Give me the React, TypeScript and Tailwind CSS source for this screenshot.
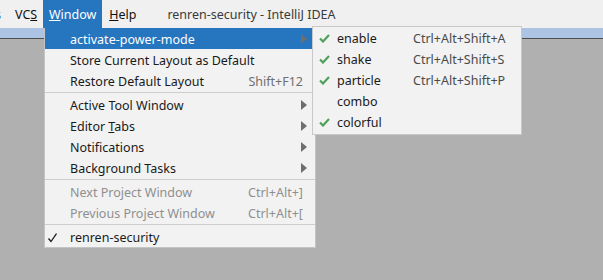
import React from "react";

const font = { fontFamily: '"Noto Sans", "Liberation Sans", sans-serif' };

function Arrow() {
  return (
    <svg width="6" height="10" viewBox="0 0 6 10" className="absolute right-[8px] top-[6px]">
      <path d="M0 0 L6 5 L0 10 Z" fill="#6e6e6e" />
    </svg>
  );
}

function GreenCheck() {
  return (
    <svg width="11" height="9" viewBox="0 0 11 9" className="absolute left-[6px] top-[6px]">
      <path d="M1 4.5 L4 7.5 L10 1" fill="none" stroke="#4fa05c" strokeWidth="2.2" />
    </svg>
  );
}

type Item = { label: React.ReactNode; shortcut?: string; arrow?: boolean; disabled?: boolean; active?: boolean; check?: boolean };

function Row({ item }: { item: Item }) {
  const color = item.active ? "text-white" : item.disabled ? "text-[#8f8f8f]" : "text-[#1a1a1a]";
  return (
    <div className={`relative flex h-[21px] items-center pl-[25px] pr-[12px] pt-[3px] ${item.active ? "bg-[#2675bf]" : ""} ${color}`}>
      {item.check && (
        <svg width="9" height="10" viewBox="0 0 9 10" className="absolute left-[3px] top-[7px]">
          <path d="M0.5 5.5 L3 8.5 L8.5 0.5" fill="none" stroke="#1a1a1a" strokeWidth="1.3" />
        </svg>
      )}
      <span className="flex-1 whitespace-nowrap">{item.label}</span>
      {item.shortcut && (
        <span className={`whitespace-nowrap ${item.disabled ? "text-[#8f8f8f]" : "text-[#707070]"}`}>{item.shortcut}</span>
      )}
      {item.arrow && <Arrow />}
    </div>
  );
}

function Sep() {
  return <div className="my-px h-px bg-[#cdcdcd]" />;
}

export default function App() {
  const sub = [
    { label: "enable", shortcut: "Ctrl+Alt+Shift+A", check: true },
    { label: "shake", shortcut: "Ctrl+Alt+Shift+S", check: true },
    { label: "particle", shortcut: "Ctrl+Alt+Shift+P", check: true },
    { label: "combo", check: false },
    { label: "colorful", check: true },
  ];
  return (
    <div className="relative h-[280px] w-[603px] overflow-hidden bg-[#b0b0b0] text-[12.5px]" style={font}>
      <div className="flex h-[28px] items-center bg-[#f0f0f0] pt-[2px] text-[#111]">
        <span className="ml-[-5px] w-[20px]">s</span>
        <span>VC<span className="underline">S</span></span>
        <span className="ml-[6px] mt-[-2px] flex h-[28px] w-[59px] items-center justify-center bg-[#2675bf] pt-[2px] text-white">
          <span><span className="underline">W</span>indow</span>
        </span>
        <span className="ml-[7px]"><span className="underline">H</span>elp</span>
        <span className="ml-[31px] text-[#3a3a3a]">renren-security - IntelliJ IDEA</span>
      </div>
      <div className="h-[11px] border-b border-[#4d4d4d] bg-[#adc3e3]" />

      <div className="absolute left-[44px] top-[28px] w-[272px] border-x border-b border-[#c4c4c4] bg-[#f2f2f2]">
        <Row item={{ label: "activate-power-mode", arrow: true, active: true }} />
        <Row item={{ label: "Store Current Layout as Default" }} />
        <Row item={{ label: "Restore Default Layout", shortcut: "Shift+F12" }} />
        <Sep />
        <Row item={{ label: "Active Tool Window", arrow: true }} />
        <Row item={{ label: <span>Editor <span className="underline">T</span>abs</span>, arrow: true }} />
        <Row item={{ label: "Notifications", arrow: true }} />
        <Row item={{ label: "Background Tasks", arrow: true }} />
        <Sep />
        <Row item={{ label: "Next Project Window", shortcut: "Ctrl+Alt+]", disabled: true }} />
        <Row item={{ label: "Previous Project Window", shortcut: "Ctrl+Alt+[", disabled: true }} />
        <Sep />
        <Row item={{ label: "renren-security", check: true }} />
      </div>

      <div className="absolute left-[312px] top-[26px] w-[210px] border border-[#c8c8c8] bg-[#f2f2f2] pb-px pt-px text-[#1a1a1a]">
        {sub.map((s) => (
          <div key={s.label} className="relative flex h-[21px] items-center pl-[24px] pr-[12px] pt-[1px]">
            {s.check && <GreenCheck />}
            <span className="w-[76px] whitespace-nowrap">{s.label}</span>
            {s.shortcut && <span className="whitespace-nowrap text-[#4a4a4a]">{s.shortcut}</span>}
          </div>
        ))}
      </div>
    </div>
  );
}
